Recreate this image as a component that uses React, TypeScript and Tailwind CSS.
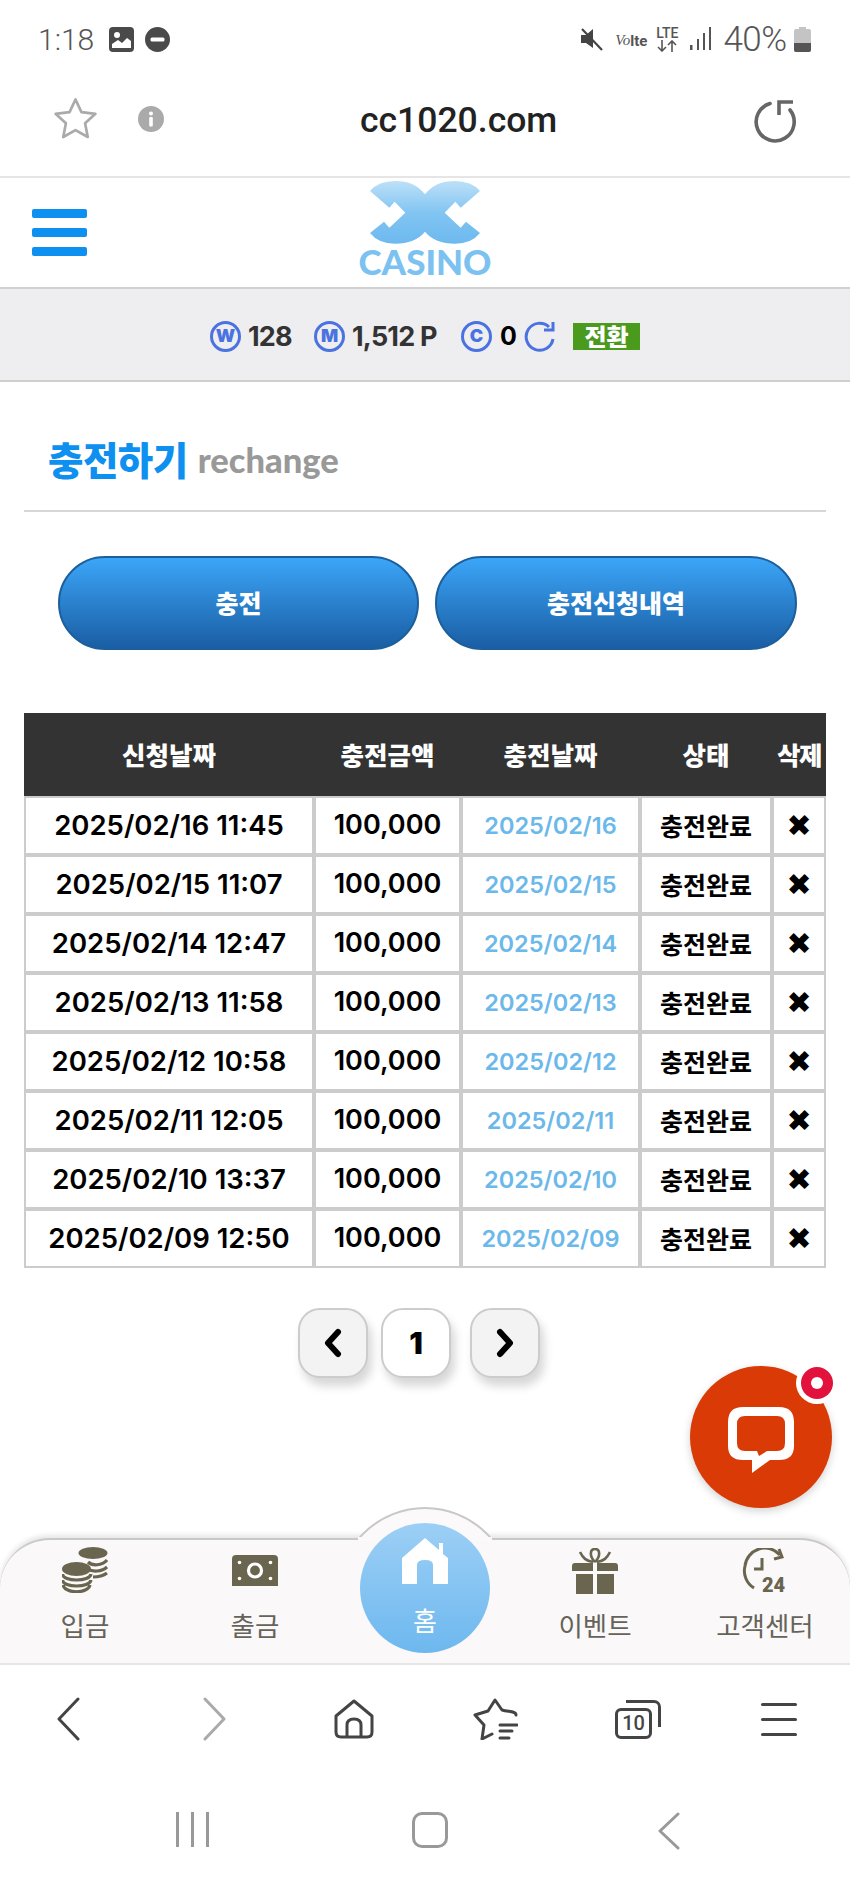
import React from "react";

const rows = [
  ["2025/02/16 11:45", "2025/02/16"],
  ["2025/02/15 11:07", "2025/02/15"],
  ["2025/02/14 12:47", "2025/02/14"],
  ["2025/02/13 11:58", "2025/02/13"],
  ["2025/02/12 10:58", "2025/02/12"],
  ["2025/02/11 12:05", "2025/02/11"],
  ["2025/02/10 13:37", "2025/02/10"],
  ["2025/02/09 12:50", "2025/02/09"],
];

const olive = "#6a654f";

function CoinBadge({ letter }: { letter: string }) {
  return (
    <span className="flex h-[31px] w-[31px] items-center justify-center rounded-full border-[3px] border-[#4a72e0] font-['Inter'] text-[18px] font-black leading-none text-[#4a72e0]">
      {letter}
    </span>
  );
}

function Logo() {
  return (
    <div className="flex flex-col items-center">
      <svg width="110" height="63" viewBox="60 18 330 189">
        <defs>
          <linearGradient id="logoG" x1="0" y1="0" x2="0" y2="1">
            <stop offset="0" stopColor="#bde0f8" />
            <stop offset="0.5" stopColor="#82c5f2" />
            <stop offset="1" stopColor="#6db9ef" />
          </linearGradient>
        </defs>
        <path
          fill="url(#logoG)"
          d="M60 48 Q85 18 135 18 Q195 18 225 58 Q255 18 315 18 Q365 18 390 48 L332 98 L316 80 L284 113 L332 158 L348 140 L390 174 Q365 206 315 206 Q255 206 225 170 Q195 206 135 206 Q85 206 60 174 L102 140 L118 158 L166 113 L134 80 L118 98 Z"
        />
      </svg>
      <span className="mt-[2px] font-['Lato'] text-[35px] font-black leading-[30px] text-[#7cc2f1]">CASINO</span>
    </div>
  );
}

function StatusBar() {
  return (
    <div className="flex h-[62px] items-start pl-[38px] pt-[27px] text-[#555]">
      <span className="font-['Roboto'] text-[30px] font-light leading-[25px]">1:18</span>
      <svg className="ml-[15px]" width="25" height="25" viewBox="0 0 25 25">
        <rect width="25" height="25" rx="4" fill="#4a4a4a" />
        <circle cx="8" cy="8" r="3" fill="#fff" />
        <path d="M3 21 V17 L9 13 L13 16 L18 11 L22 14 V21 Z" fill="#fff" />
      </svg>
      <svg className="ml-[11px]" width="25" height="25" viewBox="0 0 25 25">
        <circle cx="12.5" cy="12.5" r="12.5" fill="#4a4a4a" />
        <rect x="5.5" y="10.5" width="14" height="4" rx="1.5" fill="#fff" />
      </svg>
      <svg className="ml-[410px] mt-[1px]" width="23" height="23" viewBox="0 0 23 23">
        <path d="M1 7 H6 L13 1 V20 L6 15 H1 Z" fill="#444" />
        <path d="M2 1 L22 22" stroke="#444" strokeWidth="2.2" />
      </svg>
      <span className="ml-[12px] mt-[6px] font-['Liberation_Serif'] text-[15px] italic leading-[15px] text-[#555]">
        Vo
      </span>
      <span className="mt-[7px] font-['Roboto'] text-[15px] font-bold leading-[14px] text-[#555]">lte</span>
      <div className="ml-[7px] flex w-[26px] flex-col items-center">
        <span className="font-['Roboto'] text-[14px] font-medium leading-[13px]">LTE</span>
        <svg width="24" height="12" viewBox="0 0 24 12">
          <path d="M7 0 V11 M3 7 L7 11 L11 7 M17 12 V1 M13 5 L17 1 L21 5" stroke="#555" strokeWidth="1.6" fill="none" />
        </svg>
      </div>
      <svg className="ml-[9px]" width="23" height="23" viewBox="0 0 23 23">
        <rect x="1" y="18" width="2.5" height="5" fill="#555" />
        <rect x="8" y="12" width="2" height="11" fill="#555" />
        <rect x="14" y="6" width="2" height="17" fill="#555" />
        <rect x="20" y="0" width="2" height="23" fill="#555" />
      </svg>
      <span className="ml-[11px] w-[66px] whitespace-nowrap font-['Roboto'] text-[35px] font-light leading-[25px] tracking-[-0.5px]">
        40%
      </span>
      <svg className="ml-[5px]" width="17" height="25" viewBox="0 0 17 25">
        <path d="M5 0 H12 V2 H15 Q17 2 17 4 V23 Q17 25 15 25 H2 Q0 25 0 23 V4 Q0 2 2 2 H5 Z" fill="#c4c4c4" />
        <path d="M0 16 H17 V23 Q17 25 15 25 H2 Q0 25 0 23 Z" fill="#555" />
      </svg>
    </div>
  );
}

function UrlBar() {
  return (
    <div className="relative flex h-[116px] items-center border-b-2 border-[#e5e5e5] pl-[52px]">
      <svg width="47" height="46" viewBox="0 0 24 24" fill="none" stroke="#aaa" strokeWidth="1.4" strokeLinejoin="round">
        <path d="M12 1.8 L15.1 8.4 L22.4 9.3 L17 14.2 L18.4 21.4 L12 17.8 L5.6 21.4 L7 14.2 L1.6 9.3 L8.9 8.4 Z" />
      </svg>
      <svg className="ml-[39px]" width="26" height="26" viewBox="0 0 26 26">
        <circle cx="13" cy="13" r="13" fill="#aaa" />
        <circle cx="13" cy="7.5" r="2" fill="#fff" />
        <rect x="11.2" y="11" width="3.6" height="9.5" rx="1" fill="#fff" />
      </svg>
      <span className="ml-[196px] mt-[3px] font-['Roboto'] text-[35.5px] font-medium leading-none text-[#222]">cc1020.com</span>
      <svg className="ml-auto mr-[53px] mt-[5px]" width="44" height="44" viewBox="0 0 44 44" fill="none" stroke="#666" strokeWidth="3.6">
        <path d="M17 3.6 A19 19 0 1 0 37 10" strokeLinecap="round" />
        <path d="M40 2 H26 V15" />
      </svg>
    </div>
  );
}

function Header() {
  return (
    <div className="grid h-[111px] grid-cols-[1fr_auto_1fr] items-center border-b-2 border-[#d0d0d0] px-[32px]">
      <div className="flex w-[55px] flex-col gap-[10px]">
        <div className="h-[9px] rounded-[2px] bg-[#0d90ef]" />
        <div className="h-[9px] rounded-[2px] bg-[#0d90ef]" />
        <div className="h-[9px] rounded-[2px] bg-[#0d90ef]" />
      </div>
      <div className="mt-[3px] self-start">
        <Logo />
      </div>
      <div />
    </div>
  );
}

function Balance() {
  return (
    <div className="flex h-[93px] items-center border-b-2 border-[#cfcfcf] bg-[#eeeef0] pl-[210px] pt-[3px] font-['Inter'] font-bold">
      <CoinBadge letter="W" />
      <span className="ml-[7px] w-[46px] whitespace-nowrap text-[27px] leading-none tracking-[-0.8px] text-[#333]">128</span>
      <span className="ml-[20px]">
        <CoinBadge letter="M" />
      </span>
      <span className="ml-[7px] w-[88px] whitespace-nowrap text-[27px] leading-none tracking-[-0.8px] text-[#333]">1,512 P</span>
      <span className="ml-[21px]">
        <CoinBadge letter="C" />
      </span>
      <span className="ml-[8px] w-[15px] text-[25px] leading-none text-black">0</span>
      <svg className="ml-[9px]" width="31" height="31" viewBox="0 0 31 31" fill="none" stroke="#4a72e0" strokeWidth="3">
        <path d="M25 6 A13.5 13.5 0 1 0 29 18" />
        <path d="M29 1 V9 H20" />
      </svg>
      <span className="ml-[18px] flex h-[27px] w-[67px] items-center justify-center bg-[#4a9a1e] font-['Noto_Sans_CJK_KR'] text-[24px] font-black leading-none text-white">
        전환
      </span>
    </div>
  );
}

function PageButton({ children, plain }: { children: React.ReactNode; plain?: boolean }) {
  return (
    <div
      className={`flex h-[70px] w-[70px] items-center justify-center rounded-[22px] border-2 border-[#cccccc] shadow-[4px_8px_10px_rgba(0,0,0,0.16)] ${
        plain ? "bg-white" : "bg-[#f3f3f3]"
      }`}
    >
      {children}
    </div>
  );
}

function ChatButton() {
  return (
    <div className="absolute left-[690px] top-[1366px] h-[142px] w-[142px] rounded-full bg-[#d93a06] shadow-[0_3px_8px_rgba(0,0,0,0.18)]">
      <svg className="absolute left-[38px] top-[41px]" width="66" height="66" viewBox="0 0 66 66">
        <path
          d="M15 0 H51 Q66 0 66 15 V39 Q66 53 51 53 H42 L24 66 V53 H15 Q0 53 0 39 V15 Q0 0 15 0 Z"
          fill="#fff"
        />
        <path
          d="M17 9 H49 Q57 9 57 17 V36 Q57 44 49 44 H39 L31 49 L29 44 H17 Q9 44 9 36 V17 Q9 9 17 9 Z"
          fill="#d93a06"
        />
      </svg>
      <div className="absolute left-[106px] top-[-4px] flex h-[42px] w-[42px] items-center justify-center rounded-full bg-white">
        <div className="flex h-[32px] w-[32px] items-center justify-center rounded-full bg-[#e2123c]">
          <div className="h-[12px] w-[12px] rounded-full bg-white" />
        </div>
      </div>
    </div>
  );
}

function NavItem({ icon, label }: { icon: React.ReactNode; label: string }) {
  return (
    <div className="flex flex-col items-center">
      <div className="flex h-[47px] items-start justify-center">{icon}</div>
      <span className="mt-[17px] text-[26.5px] leading-[28px] text-[#66635a]">{label}</span>
    </div>
  );
}

function BottomNav() {
  return (
    <div className="relative h-[127px] rounded-t-[50px] border-b-2 border-t-2 border-b-[#e6e6e6] border-t-[#c8c8c8] bg-[#faf8f8] pt-[7px] shadow-[0_-3px_5px_rgba(0,0,0,0.10)]">
      <div className="absolute left-[337px] top-[-33px] h-[33px] w-[176px] overflow-hidden">
        <div className="h-[176px] w-[176px] rounded-full border-2 border-[#c8c8c8] bg-[#fbf9f9]" />
      </div>
      <div className="absolute left-[358px] top-[-3px] h-[4px] w-[134px] bg-[#fbf9f9]" />
      <div className="grid grid-cols-5">
        <NavItem
          label="입금"
          icon={
            <svg width="46" height="46" viewBox="0 0 46 46" fill="none">
              <g stroke={olive} strokeWidth="3.2">
                <path d="M26 15 C30 19 40 19 45 13 M26 22 C30 25 40 25 45 20 M31 30 C36 30 41 29 45 26" />
                <path d="M0.5 27 C1 35 28 35 29 27 M0.5 33 C1 41 28 41 29 33 M1 38 C3 47 26 47 28 38" />
              </g>
              <ellipse cx="31" cy="6" rx="14.5" ry="6" fill={olive} />
              <ellipse cx="14.5" cy="22" rx="14.5" ry="7" fill={olive} />
            </svg>
          }
        />
        <NavItem
          label="출금"
          icon={
            <svg className="mt-[8px]" width="46" height="31" viewBox="0 0 46 31">
              <path d="M4 0 H42 Q46 0 46 4 V31 H0 V4 Q0 0 4 0 Z" fill={olive} />
              <circle cx="23" cy="15.5" r="6.5" fill="none" stroke="#fff" strokeWidth="3.2" />
              <circle cx="7.5" cy="7.5" r="1.8" fill="#fff" />
              <circle cx="38.5" cy="7.5" r="1.8" fill="#fff" />
              <circle cx="7.5" cy="23.5" r="1.8" fill="#fff" />
              <circle cx="38.5" cy="23.5" r="1.8" fill="#fff" />
            </svg>
          }
        />
        <div />
        <NavItem
          label="이벤트"
          icon={
            <svg className="mt-[1px]" width="46" height="46" viewBox="0 0 46 46">
              <g fill="none" stroke={olive} strokeWidth="2.6">
                <path d="M23 14 C17 8 18 1 23 1 C28 1 29 8 23 14" />
                <path d="M21 14 C14 13 11 10 8 4 M25 14 C32 13 35 10 38 4" />
              </g>
              <path d="M3 15 H21 V23 H0 V18 Q0 15 3 15 Z M25 15 H43 Q46 15 46 18 V23 H25 Z" fill={olive} />
              <rect x="4" y="26" width="17" height="20" fill={olive} />
              <rect x="25" y="26" width="17" height="20" fill={olive} />
            </svg>
          }
        />
        <NavItem
          label="고객센터"
          icon={
            <svg className="mt-[1px]" width="48" height="54" viewBox="0 0 48 54" fill="none">
              <path d="M39 7 A20 20 0 0 0 4 18 A20 20 0 0 0 13 40" stroke={olive} strokeWidth="3" />
              <path d="M38 1 L41 9 L33 11" stroke={olive} strokeWidth="3" />
              <path d="M21 10 V21 H13" stroke={olive} strokeWidth="3" />
              <text x="21" y="44" fontSize="20" fontWeight="900" fill={olive} fontFamily="Roboto">
                24
              </text>
            </svg>
          }
        />
      </div>
      <div className="absolute left-[360px] top-[-17px] flex h-[130px] w-[130px] flex-col items-center rounded-full bg-gradient-to-b from-[#9ccff5] to-[#6db8ef] pt-[15px]">
        <svg width="46" height="46" viewBox="0 0 46 46" fill="#fff">
          <path d="M0 20 L23 0 L37 12 V5 H41 V16 L46 20 V46 H31 V27 Q31 22 23 22 Q15 22 15 27 V46 H0 Z" />
        </svg>
        <span className="mt-[22px] text-[26px] leading-[28px] text-white">홈</span>
      </div>
    </div>
  );
}

function Toolbar() {
  return (
    <div className="flex h-[110px] items-center pb-[2px] text-[#444]">
      <svg className="ml-[57px]" width="23" height="44" viewBox="0 0 23 44" fill="none" stroke="#444" strokeWidth="3" strokeLinecap="round" strokeLinejoin="round">
        <path d="M21 2 L2 22 L21 42" />
      </svg>
      <svg className="ml-[123px]" width="23" height="44" viewBox="0 0 23 44" fill="none" stroke="#aaa" strokeWidth="3" strokeLinecap="round" strokeLinejoin="round">
        <path d="M2 2 L21 22 L2 42" />
      </svg>
      <svg className="ml-[108px]" width="40" height="40" viewBox="0 0 40 40" fill="none" stroke="#444" strokeWidth="3" strokeLinejoin="round">
        <path d="M20 2 L38 17 V33 Q38 38 33 38 H7 Q2 38 2 33 V17 Z" />
        <path d="M13 38 V26 Q13 20 20 20 Q27 20 27 26 V38" />
      </svg>
      <svg className="ml-[99px]" width="45" height="42" viewBox="0 0 45 42" fill="none" stroke="#444" strokeWidth="3" strokeLinecap="round" strokeLinejoin="round">
        <path d="M43 17 C43 13 36 14 29 12 L22 2 L15 13 L2 17 L11 27 L9 41 L19 36" />
        <path d="M27 27 H44 M27 33 H39 M27 40 H36" />
      </svg>
      <div className="relative ml-[97px] h-[39px] w-[46px]">
        <div className="absolute left-0 top-[8px] flex h-[31px] w-[37px] items-center justify-center rounded-[6px] border-[3px] border-[#444] font-['Roboto'] text-[20px] font-medium leading-none text-[#444]">
          10
        </div>
        <div className="absolute right-0 top-0 h-[27px] w-[35px] rounded-tr-[7px] border-r-[3px] border-t-[3px] border-[#444]" />
      </div>
      <div className="ml-[100px] flex w-[36px] flex-col gap-[12px]">
        <div className="h-[3px] rounded-full bg-[#444]" />
        <div className="h-[3px] rounded-full bg-[#444]" />
        <div className="h-[3px] rounded-full bg-[#444]" />
      </div>
    </div>
  );
}

function SystemNav() {
  return (
    <div className="flex h-[114px] items-start pt-[37px]">
      <div className="ml-[176px] flex h-[35px] w-[33px] justify-between">
        <div className="w-[3px] bg-[#999]" />
        <div className="w-[3px] bg-[#999]" />
        <div className="w-[3px] bg-[#999]" />
      </div>
      <div className="ml-[203px] h-[36px] w-[36px] rounded-[10px] border-[3px] border-[#999]" />
      <svg className="ml-[210px]" width="22" height="38" viewBox="0 0 22 38" fill="none" stroke="#999" strokeWidth="3" strokeLinecap="round" strokeLinejoin="round">
        <path d="M20 2 L2 19 L20 36" />
      </svg>
    </div>
  );
}

export default function App() {
  const cell = "flex items-center justify-center border-2 border-[#cccccc] bg-white whitespace-nowrap";
  return (
    <div className="relative flex h-[1889px] w-[850px] flex-col overflow-hidden bg-white font-['Noto_Sans_CJK_KR','Noto_Sans',sans-serif]">
      <StatusBar />
      <UrlBar />
      <Header />
      <Balance />

      <div className="mx-[24px] flex h-[130px] items-end gap-[10px] border-b-2 border-[#d6d6d6] pb-[30px] pl-[24px]">
        <span className="text-[38.5px] font-black leading-[44px] tracking-[-0.5px] text-[#0d90ef]">충전하기</span>
        <span className="font-['Lato'] text-[34.5px] font-black leading-[40px] text-[#999999]">rechange</span>
      </div>

      <div className="mt-[44px] flex gap-[16px] pl-[58px]">
        <div className="flex h-[94px] w-[361px] items-center justify-center rounded-full border-2 border-[#1b5f9c] bg-gradient-to-b from-[#3ca6f8] to-[#1a5ea4] text-[25px] font-black text-white">
          충전
        </div>
        <div className="flex h-[94px] w-[362px] items-center justify-center rounded-full border-2 border-[#1b5f9c] bg-gradient-to-b from-[#3ca6f8] to-[#1a5ea4] text-[25px] font-black text-white">
          충전신청내역
        </div>
      </div>

      <div className="mx-[24px] mt-[63px]">
        <div className="grid h-[83px] grid-cols-[290px_147px_179px_132px_54px] items-center bg-[#333333] text-center text-[25.5px] font-black text-white">
          <span>신청날짜</span>
          <span>충전금액</span>
          <span>충전날짜</span>
          <span>상태</span>
          <span className="whitespace-nowrap tracking-[-1.5px]">삭제</span>
        </div>
        {rows.map(([a, b]) => (
          <div key={a} className="grid h-[59px] grid-cols-[290px_147px_179px_132px_54px]">
            <div className={`${cell} font-['Inter'] text-[27.5px] font-semibold text-black`}>{a}</div>
            <div className={`${cell} font-['Inter'] text-[27px] font-semibold text-black`}>100,000</div>
            <div className={`${cell} font-['Inter'] text-[23.5px] font-semibold text-[#6bb8ea]`}>{b}</div>
            <div className={`${cell} text-[25px] font-bold text-black`}>충전완료</div>
            <div className={`${cell} font-['DejaVu_Sans'] text-[30px] text-black`}>✖</div>
          </div>
        ))}
      </div>

      <div className="mt-[40px] flex justify-start pl-[298px]">
        <PageButton>
          <svg width="20" height="30" viewBox="0 0 20 30" fill="none" stroke="#000" strokeWidth="6" strokeLinecap="round" strokeLinejoin="round">
            <path d="M15 4 L5 15 L15 26" />
          </svg>
        </PageButton>
        <div className="ml-[13px]">
          <PageButton plain>
            <span className="font-['Inter'] text-[30px] font-black leading-none text-black">1</span>
          </PageButton>
        </div>
        <div className="ml-[19px]">
          <PageButton>
            <svg width="20" height="30" viewBox="0 0 20 30" fill="none" stroke="#000" strokeWidth="6" strokeLinecap="round" strokeLinejoin="round">
              <path d="M5 4 L15 15 L5 26" />
            </svg>
          </PageButton>
        </div>
      </div>

      <div className="flex-1" />
      <BottomNav />
      <Toolbar />
      <SystemNav />
      <ChatButton />
    </div>
  );
}
